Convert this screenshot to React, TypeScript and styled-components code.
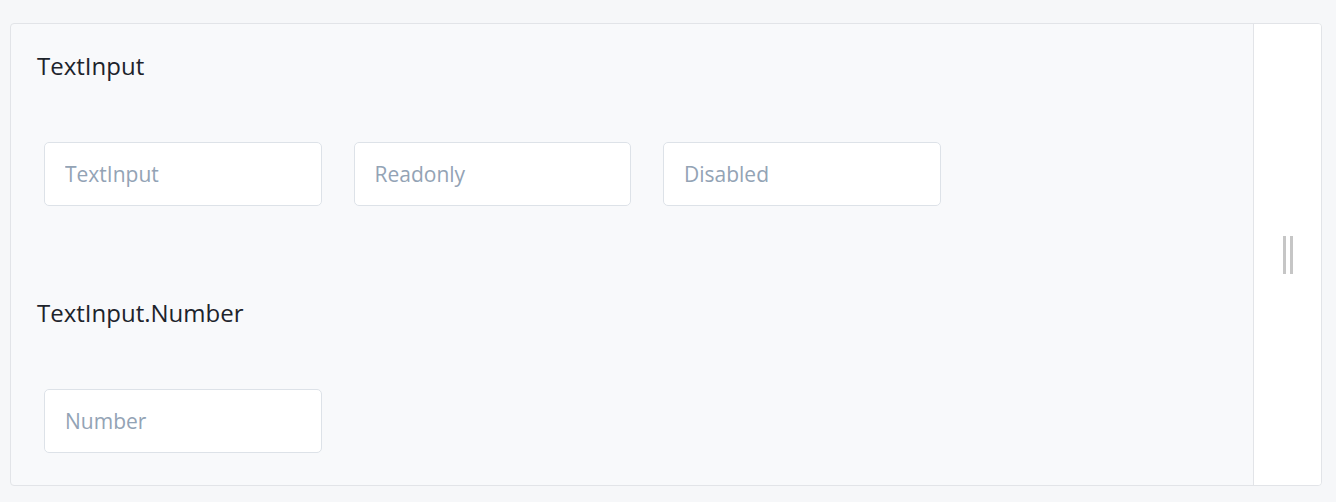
import React from "react";
import styled, { createGlobalStyle } from "styled-components";

const Global = createGlobalStyle`
  html, body { margin: 0; padding: 0; background: #f6f7f9; }
  body { font-family: "Open Sans", "Noto Sans", sans-serif; }
  * { box-sizing: border-box; }
`;

const Page = styled.div`
  padding: 23px 14px 16px 10px;
  height: 502px;
`;

const Panel = styled.div`
  display: flex;
  height: 463px;
  border: 1px solid #e2e4e8;
  border-radius: 4px;
  background: #f8f9fb;
  overflow: hidden;
`;

const Content = styled.div`
  flex: 1;
  padding: 24px 26px 0 26px;
`;

const Side = styled.div`
  width: 68px;
  background: #ffffff;
  border-left: 1px solid #e2e4e8;
  display: flex;
  align-items: center;
  justify-content: center;
`;

const Handle = styled.div`
  display: flex;
  gap: 4px;
  & > span {
    width: 3px;
    height: 38px;
    background: #c6c6c6;
  }
`;

const Section = styled.section<{ gap: number }>`
  display: flex;
  flex-direction: column;
  gap: ${(p) => p.gap}px;
  margin-bottom: 89px;
`;

const Title = styled.h2`
  margin: 0;
  font-weight: 400;
  font-size: 24px;
  line-height: 36px;
  color: #1d232b;
`;

const Row = styled.div`
  display: flex;
  gap: 32px;
  padding-left: 7px;
`;

const Input = styled.input`
  width: 277.5px;
  height: 64px;
  border: 1px solid #dde2e8;
  border-radius: 5px;
  background: #ffffff;
  padding: 0 20px;
  font-family: inherit;
  font-size: 21px;
  color: #1d232b;
  outline: none;
  &::placeholder { color: #93a3b5; }
  &:disabled, &:read-only { background: #ffffff; }
`;

export default function App() {
  return (
    <>
      <Global />
      <Page>
        <Panel>
          <Content>
            <Section gap={58}>
              <Title>TextInput</Title>
              <Row>
                <Input placeholder="TextInput" />
                <Input placeholder="Readonly" readOnly />
                <Input placeholder="Disabled" disabled />
              </Row>
            </Section>
            <Section gap={58}>
              <Title>TextInput.Number</Title>
              <Row>
                <Input placeholder="Number" type="number" />
              </Row>
            </Section>
          </Content>
          <Side>
            <Handle>
              <span />
              <span />
            </Handle>
          </Side>
        </Panel>
      </Page>
    </>
  );
}
